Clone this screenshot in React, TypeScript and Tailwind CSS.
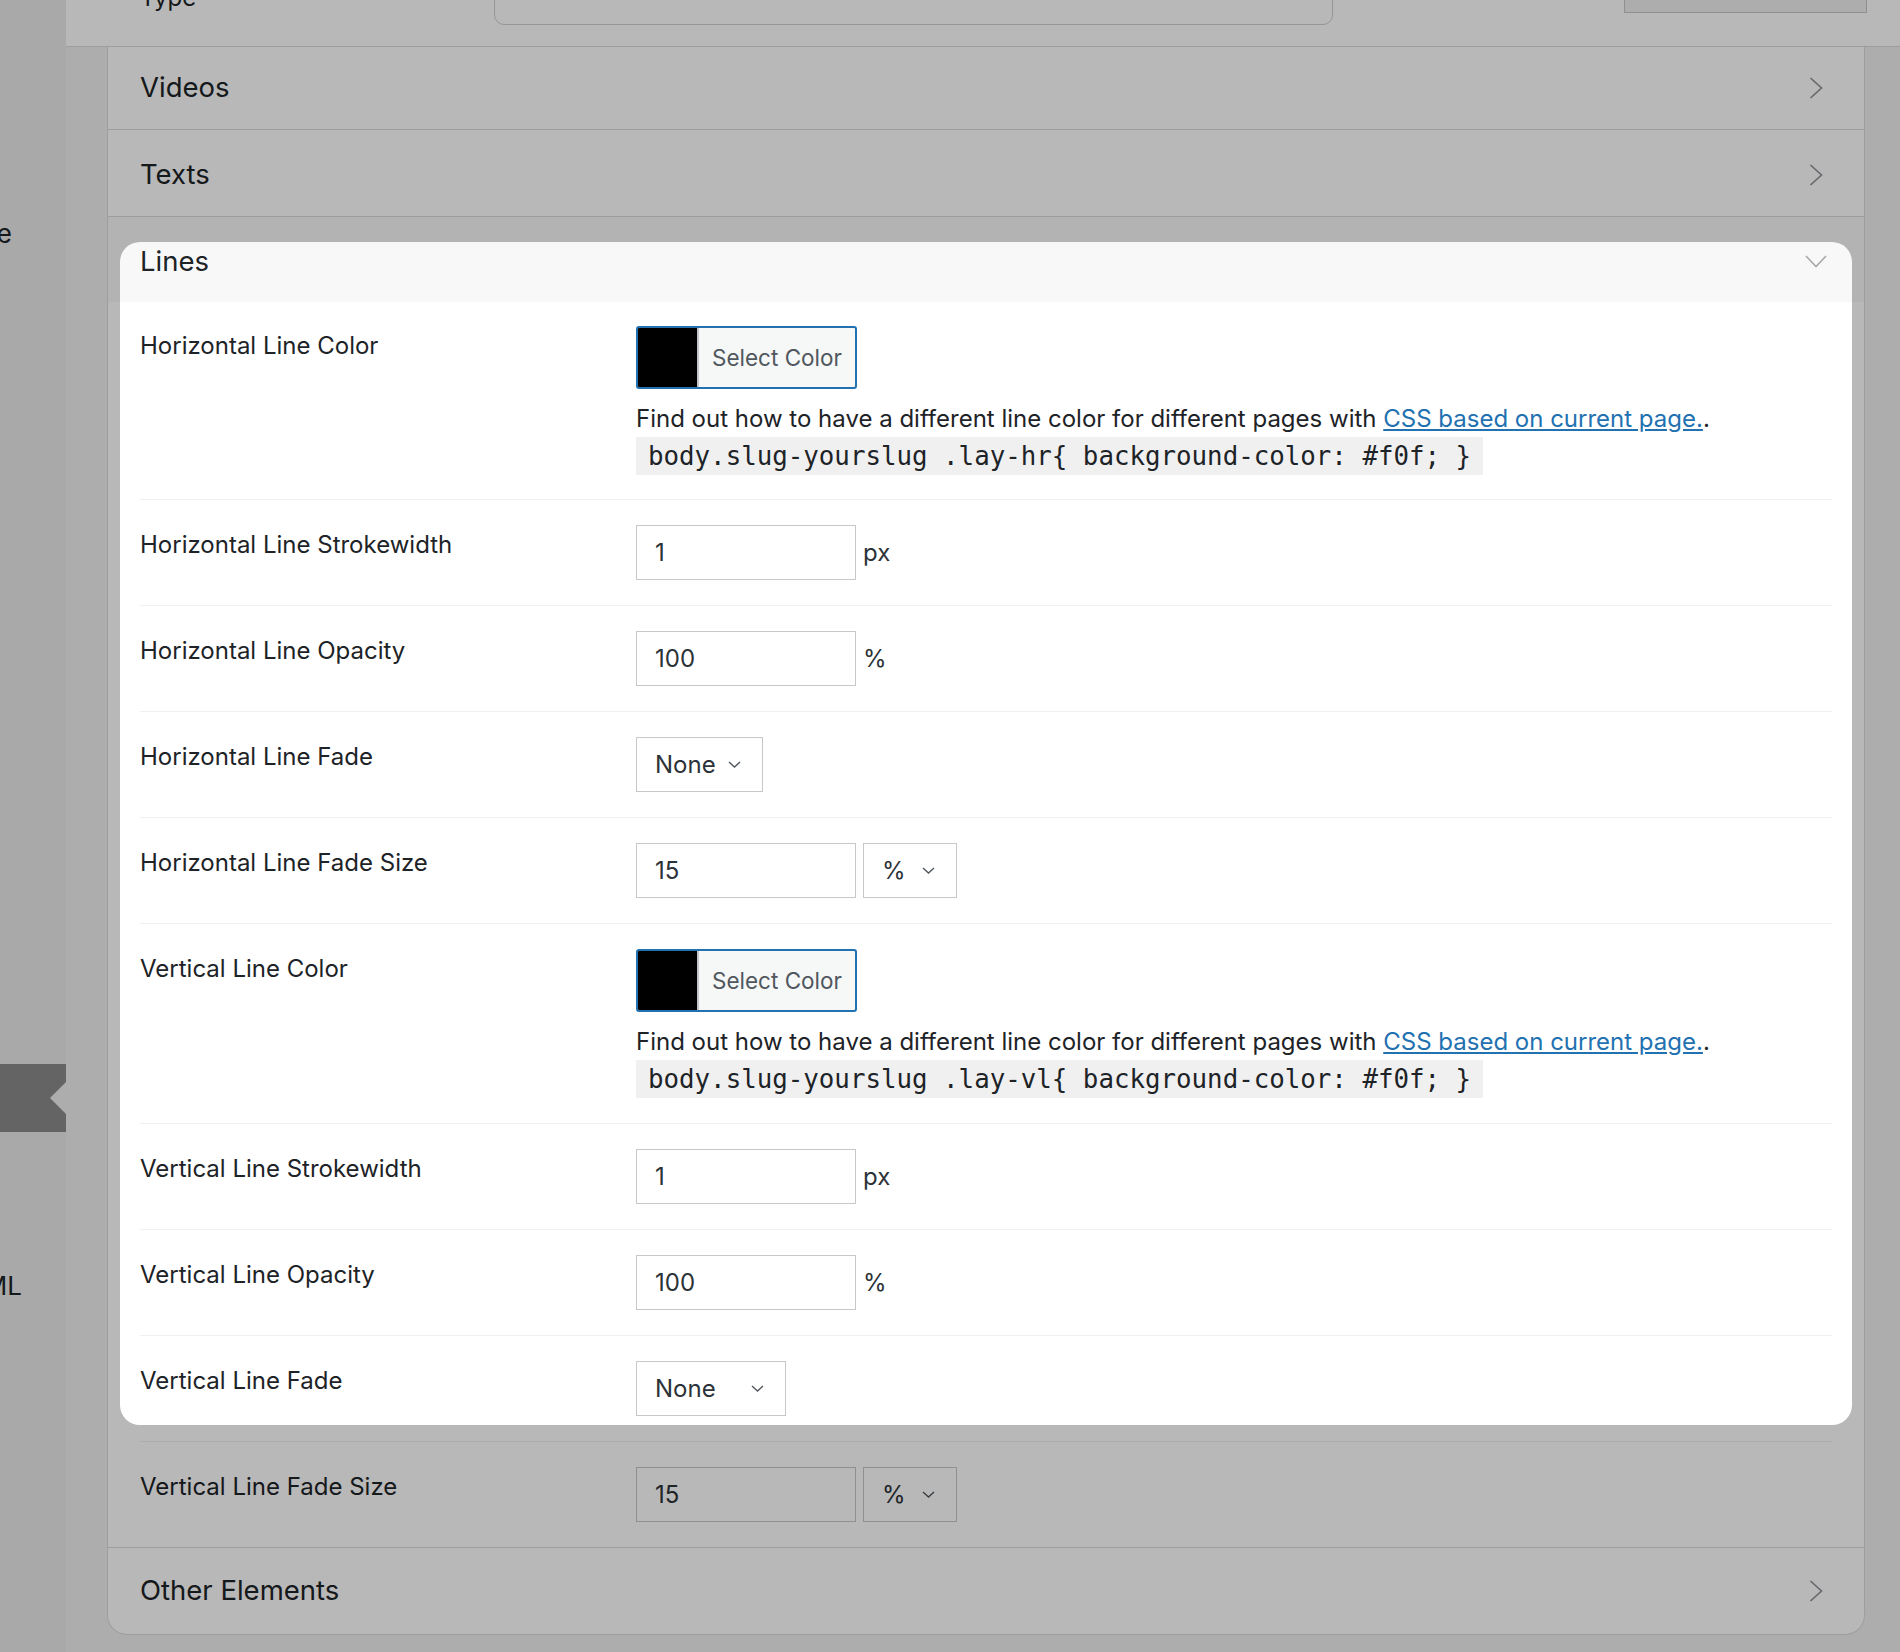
import React from 'react';

const sans = "font-['Inter','Liberation_Sans',sans-serif]";

function ChevronSmall() {
  return (
    <svg width="13" height="7" viewBox="0 0 13 7" fill="none" className="shrink-0">
      <path d="M1 1l5.5 5L12 1" stroke="#50575e" strokeWidth="1.4" />
    </svg>
  );
}

function ChevronRight() {
  return (
    <svg width="14" height="22" viewBox="0 0 14 22" fill="none">
      <path d="M1.5 1l11 10-11 10" stroke="#8c8f94" strokeWidth="1.6" />
    </svg>
  );
}

function ChevronDown() {
  return (
    <svg width="22" height="13" viewBox="0 0 22 13" fill="none">
      <path d="M1 1l10 10.5L21 1" stroke="#a7aaad" strokeWidth="1.6" />
    </svg>
  );
}

function SectionHeader({ title, h, open, last }: { title: string; h: string; open?: boolean; last?: boolean }) {
  return (
    <div className={`${h} flex items-center justify-between pl-[32px] ${open ? 'pr-[37px] bg-[#f8f8f8]' : 'pr-[41px]'} ${open || last ? '' : 'border-b border-[#dcdcde]'}`}>
      <span className="text-[27.5px] text-[#1d2327]">{title}</span>
      {open ? <ChevronDown /> : <ChevronRight />}
    </div>
  );
}

function Row({ label, children, last, first }: { label: string; children: React.ReactNode; last?: boolean; first?: boolean }) {
  return (
    <div className={`grid grid-cols-[496px_1fr] ${first ? 'pt-[24px] pb-[24px]' : 'pt-[25px] pb-[25px]'} ${last ? '' : 'border-b border-[#f0f0f1]'}`}>
      <div className="text-[24px] leading-[40px] text-[#1d2327]">{label}</div>
      <div>{children}</div>
    </div>
  );
}

function ColorField({ cls }: { cls: string }) {
  return (
    <div>
      <div className="flex h-[63px] w-[221px] overflow-hidden rounded-[3px] border-2 border-[#2271b1] bg-[#f6f7f7]">
        <span className="h-full w-[61px] border-r-2 border-[#c3c4c7] bg-black" />
        <span className="flex flex-1 items-center pl-[13px] text-[22.5px] text-[#50575e]">Select Color</span>
      </div>
      <p className="mt-[12px] text-[24px] leading-[36px] text-[#1d2327]">
        Find out how to have a different line color for different pages with{' '}
        <a className="text-[#2271b1] underline">CSS based on current page.</a>.
      </p>
      <code className="block w-fit bg-[#f0f0f1] px-[12px] font-['DejaVu_Sans_Mono',monospace] text-[25.8px] leading-[38px] text-[#1d2327]">
        {`body.slug-yourslug .lay-${cls}{ background-color: #f0f; }`}
      </code>
    </div>
  );
}

function NumberField({ value, unit }: { value: string; unit?: string }) {
  return (
    <div className="flex items-center gap-[7px]">
      <div className="flex h-[55px] w-[220px] items-center border border-[#c8c8c8] bg-white pl-[18px] text-[24px] text-[#2c3338]">
        {value}
      </div>
      {unit && <span className="text-[24px] text-[#2c3338]">{unit}</span>}
    </div>
  );
}

function SelectField({ value, w }: { value: string; w: string }) {
  return (
    <div className={`flex h-[55px] ${w} items-center justify-between border border-[#c8c8c8] bg-white pl-[18px] pr-[21px] text-[24px] text-[#2c3338]`}>
      <span>{value}</span>
      <ChevronSmall />
    </div>
  );
}

function FadeSize() {
  return (
    <div className="flex items-center gap-[7px]">
      <NumberField value="15" />
      <SelectField value="%" w="w-[94px]" />
    </div>
  );
}

export default function App() {
  return (
    <div className={`relative flex h-[1652px] w-[1900px] overflow-hidden bg-[#f0f0f1] ${sans}`}>
      {/* admin sidebar, mostly off screen */}
      <aside className="flex w-[66px] shrink-0 flex-col bg-[#ebebeb] pt-[216px] text-[26px] text-[#1d2327]">
        <div className="h-[36px] overflow-hidden leading-[36px]">
          <div className="-ml-[150px] w-[162px] whitespace-nowrap text-right">Theme</div>
        </div>
        <div className="mt-[812px] flex h-[68px] items-center justify-end bg-[#8b8b8b]">
          <span className="h-0 w-0 border-y-[16px] border-r-[16px] border-y-transparent border-r-[#f0f0f1]" />
        </div>
        <div className="mt-[136px] h-[36px] overflow-hidden leading-[36px]">
          <div className="-ml-[150px] w-[172px] whitespace-nowrap text-right">HTML</div>
        </div>
      </aside>

      <main className="flex min-w-0 flex-1 flex-col">
        {/* sticky top bar, scrolled */}
        <div className="flex h-[47px] shrink-0 items-start border-b border-[#dcdcde] bg-white pl-[74px]">
          <div className="-mt-[22px] w-[354px] text-[24px] leading-[40px] text-[#1d2327]">Type</div>
          <div className="-mt-[35px] h-[60px] w-[839px] rounded-[10px] border border-[#d0d0d0] bg-white" />
          <div className="-mt-[27px] ml-[291px] h-[40px] w-[243px] border border-[#c8c8c8] bg-[#f0f0f0]" />
        </div>

        <div className="pl-[41px] pr-[35px]">
          <div className="overflow-hidden rounded-b-[20px] border-x border-b border-[#dcdcde] bg-white">
            <SectionHeader title="Videos" h="h-[83px]" />
            <SectionHeader title="Texts" h="h-[87px] pt-[4px]" />

            <div className="border-b border-[#dcdcde]">
              <SectionHeader title="Lines" h="h-[85px] pt-[4px]" open />
              <div className="px-[32px]">
                <Row label="Horizontal Line Color" first>
                  <ColorField cls="hr" />
                </Row>
                <Row label="Horizontal Line Strokewidth">
                  <NumberField value="1" unit="px" />
                </Row>
                <Row label="Horizontal Line Opacity">
                  <NumberField value="100" unit="%" />
                </Row>
                <Row label="Horizontal Line Fade">
                  <SelectField value="None" w="w-[127px]" />
                </Row>
                <Row label="Horizontal Line Fade Size">
                  <FadeSize />
                </Row>
                <Row label="Vertical Line Color">
                  <ColorField cls="vl" />
                </Row>
                <Row label="Vertical Line Strokewidth">
                  <NumberField value="1" unit="px" />
                </Row>
                <Row label="Vertical Line Opacity">
                  <NumberField value="100" unit="%" />
                </Row>
                <Row label="Vertical Line Fade">
                  <SelectField value="None" w="w-[150px]" />
                </Row>
                <Row label="Vertical Line Fade Size" last>
                  <FadeSize />
                </Row>
              </div>
            </div>

            <SectionHeader title="Other Elements" h="h-[86px]" last />
          </div>
        </div>
      </main>

      {/* spotlight around the Lines panel */}
      <div className="pointer-events-none absolute left-[120px] top-[242px] h-[1183px] w-[1732px] rounded-[20px] shadow-[0_0_0_2400px_rgba(0,0,0,0.28)]" />
    </div>
  );
}
